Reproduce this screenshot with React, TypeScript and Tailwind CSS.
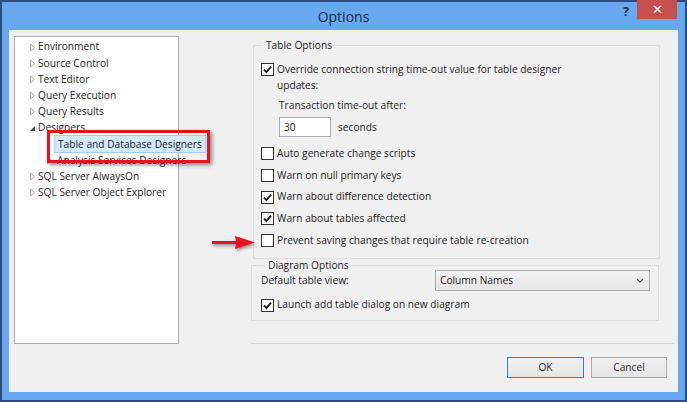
import React from "react";

const font = { fontFamily: '"Open Sans", "Noto Sans", sans-serif' };

function Check({ checked }: { checked?: boolean }) {
  return (
    <span className="w-[13px] h-[13px] border border-[#333333] bg-white flex items-center justify-center shrink-0">
      {checked && (
        <svg width="9" height="9" viewBox="0 0 9 9">
          <path d="M1 4.6 L3.4 7 L8 1.6" fill="none" stroke="#1a1a1a" strokeWidth="1.9" />
        </svg>
      )}
    </span>
  );
}

function CheckRow({ label, checked }: { label: string; checked?: boolean }) {
  return (
    <div className="flex items-center gap-[3px] h-[16px] whitespace-nowrap">
      <Check checked={checked} />
      <span>{label}</span>
    </div>
  );
}

function Arrowish({ open }: { open?: boolean }) {
  if (open) {
    return (
      <svg width="7" height="7" viewBox="0 0 7 7" className="shrink-0">
        <path d="M6 1 L6 6 L1 6 Z" fill="#444444" />
      </svg>
    );
  }
  return (
    <svg width="7" height="9" viewBox="0 0 7 9" className="shrink-0">
      <path d="M1.5 1 L5.5 4.5 L1.5 8 Z" fill="none" stroke="#a6a6a6" strokeWidth="1" />
    </svg>
  );
}

function TreeItem({ label, level = 0, open, leaf, selected }: { label: string; level?: number; open?: boolean; leaf?: boolean; selected?: boolean }) {
  return (
    <div className={`flex items-center h-[16.2px] whitespace-nowrap ${level === 0 ? "pl-[14px]" : "pl-[31px]"}`}>
      <span className="w-[9px] flex items-center shrink-0">{!leaf && <Arrowish open={open} />}</span>
      {selected ? (
        <span className="-ml-[1px] px-[3px] h-[18px] -my-[1px] flex items-center bg-[#d3e9fc] border border-[#9fcdf3]">{label}</span>
      ) : (
        <span className={level === 0 ? "" : "ml-[2px]"}>{label}</span>
      )}
    </div>
  );
}

export default function App() {
  return (
    <div className="relative w-[687px] h-[402px] border-2 border-[#2c4d7e] bg-[#68a8f0] flex flex-col text-[10.2px] text-[#1e1e1e]" style={font}>
      {/* title bar */}
      <div className="h-[28px] grid grid-cols-[1fr_auto_1fr] shrink-0">
        <div />
        <div className="text-[14px] text-[#1b2a44] pt-[4px]">Options</div>
        <div className="flex justify-end items-start pr-[8px]">
          <span className="text-[12px] font-bold text-[#1d2b40] mt-[1px] mr-[8px]">?</span>
          <span className="w-[40px] h-[19px] -mt-[2px] bg-[#c8504c] text-white text-[13px] flex items-center justify-center">✕</span>
        </div>
      </div>

      {/* dialog body */}
      <div className="flex-1 mx-[7px] mb-[8px] bg-[#f0f0f0] flex flex-col">
        <div className="flex pt-[6px] pl-[5px]">
          {/* tree */}
          <div className="w-[165px] h-[308px] bg-white border border-[#abadb3] pt-[2px] text-[#1e1e1e]">
            <TreeItem label="Environment" />
            <TreeItem label="Source Control" />
            <TreeItem label="Text Editor" />
            <TreeItem label="Query Execution" />
            <TreeItem label="Query Results" />
            <TreeItem label="Designers" open />
            <TreeItem label="Table and Database Designers" level={1} leaf selected />
            <TreeItem label="Analysis Services Designers" level={1} />
            <TreeItem label="SQL Server AlwaysOn" />
            <TreeItem label="SQL Server Object Explorer" />
          </div>

          {/* options page */}
          <div className="ml-[72px] w-[423px] h-[308px] flex flex-col">
            <fieldset className="mt-[2px] ml-[2px] w-[407px] h-[221px] border border-[#dcdcdc] pl-[7px]">
              <legend className="ml-[2px] px-[3px]">Table Options</legend>
              <div className="mt-[8px] flex items-start gap-[3px]">
                <span className="mt-[2px]"><Check checked /></span>
                <span className="leading-[16px]">
                  Override connection string time-out value for table designer
                  <br />
                  updates:
                </span>
              </div>
              <div className="ml-[18px] mt-[4px] leading-[16px]">Transaction time-out after:</div>
              <div className="ml-[18px] mt-[4px] flex items-center gap-[7px]">
                <div className="w-[52px] h-[20px] bg-white border border-[#abadb3] pl-[4px] flex items-center">30</div>
                <span>seconds</span>
              </div>
              <div className="mt-[8px] flex flex-col gap-[5.9px]">
                <CheckRow label="Auto generate change scripts" />
                <CheckRow label="Warn on null primary keys" />
                <CheckRow label="Warn about difference detection" checked />
                <CheckRow label="Warn about tables affected" checked />
                <CheckRow label="Prevent saving changes that require table re-creation" />
              </div>
            </fieldset>

            <fieldset className="mt-0 w-[408px] h-[62px] border border-[#dcdcdc] pl-[9px] pr-[8px]">
              <legend className="ml-[4px] px-[3px] leading-[13px]">Diagram Options</legend>
              <div className="flex items-center justify-between -mt-[2px]">
                <span>Default table view:</span>
                <div className="w-[215px] h-[21px] border border-[#acacac] bg-gradient-to-b from-[#f2f2f2] to-[#e6e6e6] flex items-center justify-between pl-[4px] pr-[5px]">
                  <span>Column Names</span>
                  <svg width="8" height="5" viewBox="0 0 8 5">
                    <path d="M1 1 L4 4 L7 1" fill="none" stroke="#555555" strokeWidth="1.2" />
                  </svg>
                </div>
              </div>
              <div className="mt-[6px]">
                <CheckRow label="Launch add table dialog on new diagram" checked />
              </div>
            </fieldset>

            <div className="mt-auto border-t border-[#d5d5d5]" />
          </div>
        </div>

        {/* buttons */}
        <div className="mt-[13px] flex justify-end gap-[7px] pr-[11px]">
          <button className="w-[77px] h-[21px] border border-[#3c7fb1] bg-gradient-to-b from-[#f0f0f0] to-[#e5e5e5]">OK</button>
          <button className="w-[76px] h-[21px] border border-[#acacac] bg-gradient-to-b from-[#f0f0f0] to-[#e5e5e5]">Cancel</button>
        </div>
      </div>

      {/* annotations */}
      <div className="absolute left-[45px] top-[128px] w-[163px] h-[33px] border-[3px] border-[#e3141b] shadow-[2px_2px_4px_rgba(0,0,0,0.45)]" />
      <svg className="absolute left-[207px] top-[231px]" width="50" height="20" viewBox="0 0 50 20" style={{ filter: "drop-shadow(1px 2px 1.5px rgba(0,0,0,0.4))" }}>
        <path d="M3 8 L27 8 L26 3 L46 9.5 L26 16 L27 11 L3 11 Z" fill="#e8141b" />
      </svg>
    </div>
  );
}
